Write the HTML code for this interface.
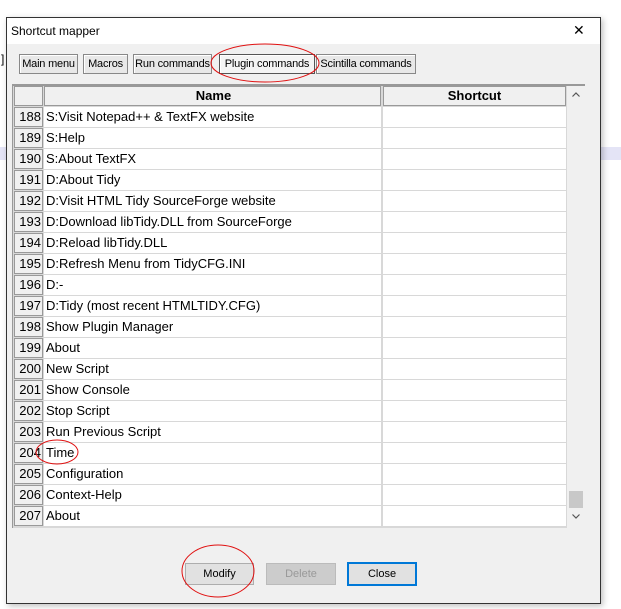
<!DOCTYPE html><html><head><style>
body{margin:0;width:621px;height:609px;background:#fff;position:relative;overflow:hidden;font-family:"Liberation Sans",sans-serif;font-size:13px}
.a{position:absolute}
.win{left:6px;top:17px;width:593px;height:585px;border:1px solid #333;background:#f0f0f0;box-shadow:2px 2px 6px rgba(0,0,0,.25)}
.title{left:0;top:0;width:593px;height:26px;background:#fff}
.tab{top:36px;height:18px;border:1px solid #888;background:#e8e8e8;font-size:11px;line-height:18px;text-align:center;box-shadow:inset 1px 1px #fff;letter-spacing:-0.2px}
.grid{left:5px;top:66px;width:572px;height:442px;background:#d8d8d8;border-top:2px solid #999;border-left:1px solid #999}
.row{position:absolute;left:1px;height:20px;width:553px}
.n{position:absolute;left:0;height:18px;background:#f0f0f0;border:1px solid #999;text-align:right;line-height:18px;font-size:13px;padding-right:1px;box-sizing:content-box;width:26px}
.c1{position:absolute;left:30px;width:337px;height:20px;background:#fff;line-height:20px;padding-left:2px;box-sizing:border-box}
.c2{position:absolute;left:369px;width:183px;height:20px;background:#fff}
.btn{top:545px;height:20px;line-height:20px;text-align:center;font-size:11px;border:1px solid #adadad;background:#e1e1e1}
</style></head><body>
<div class="a" style="left:0;top:147px;width:6px;height:13px;background:#e4e4f6"></div>
<div class="a" style="left:600px;top:147px;width:21px;height:13px;background:#e4e4f6"></div>
<div class="a" style="left:1px;top:52px;font-size:12px">]</div>
<div class="a win">
<div class="a title"><span class="a" style="left:4px;top:6px;font-size:12px">Shortcut mapper</span><span class="a" style="left:566px;top:4px;font-size:14px">✕</span></div>
<div class="a tab" style="left:12px;width:57px">Main menu</div>
<div class="a tab" style="left:76px;width:43px">Macros</div>
<div class="a tab" style="left:126px;width:77px">Run commands</div>
<div class="a tab" style="left:212px;width:94px;border-color:#555;background:#f4f4f4">Plugin commands</div>
<div class="a tab" style="left:309px;width:98px">Scintilla commands</div>
<div class="a grid">
<div class="row" style="top:0"><div class="n" style="height:18px"></div><div class="c1" style="background:#f0f0f0;border:1px solid #999;text-align:center;font-weight:bold;line-height:18px">Name</div><div class="c2" style="background:#f0f0f0;border:1px solid #999;box-sizing:border-box;text-align:center;font-weight:bold;line-height:18px">Shortcut</div></div>
<div id="rows"></div>
<div class="a" style="left:554px;top:0;width:18px;height:442px;background:#f0f0f0"><svg class="a" style="left:5px;top:6px" width="8" height="5"><path d="M0.5 4.5L4 1L7.5 4.5" fill="none" stroke="#555" stroke-width="1.2"/></svg><div class="a" style="left:2px;top:405px;width:14px;height:17px;background:#c8c8c8"></div><svg class="a" style="left:5px;top:428px" width="8" height="5"><path d="M0.5 0.5L4 4L7.5 0.5" fill="none" stroke="#555" stroke-width="1.2"/></svg></div>
</div>
<div class="a btn" style="left:178px;width:67px">Modify</div>
<div class="a btn" style="left:259px;width:68px;color:#999;background:#ccc;border-color:#bbb">Delete</div>
<div class="a btn" style="left:340px;width:66px;border:2px solid #0078d7;top:544px;background:#e1e1e1">Close</div>
</div>
<svg class="a" style="left:0;top:0" width="621" height="609"><g fill="none" stroke="#e01010" stroke-width="1"><ellipse cx="265" cy="63" rx="54" ry="19"/><ellipse cx="57" cy="452" rx="21" ry="12"/><ellipse cx="218" cy="571" rx="36" ry="26"/></g></svg>
<script>
var t=["S:Visit Notepad++ & TextFX website","S:Help","S:About TextFX","D:About Tidy","D:Visit HTML Tidy SourceForge website","D:Download libTidy.DLL from SourceForge","D:Reload libTidy.DLL","D:Refresh Menu from TidyCFG.INI","D:-","D:Tidy (most recent HTMLTIDY.CFG)","Show Plugin Manager","About","New Script","Show Console","Stop Script","Run Previous Script","Time","Configuration","Context-Help","About"];
var h="";for(var i=0;i<20;i++){h+='<div class="row" style="top:'+(21+i*21)+'px"><div class="n">'+(188+i)+'</div><div class="c1">'+t[i].replace("&","&amp;")+'</div><div class="c2"></div></div>';}
document.getElementById("rows").outerHTML=h;
</script>
</body></html>
